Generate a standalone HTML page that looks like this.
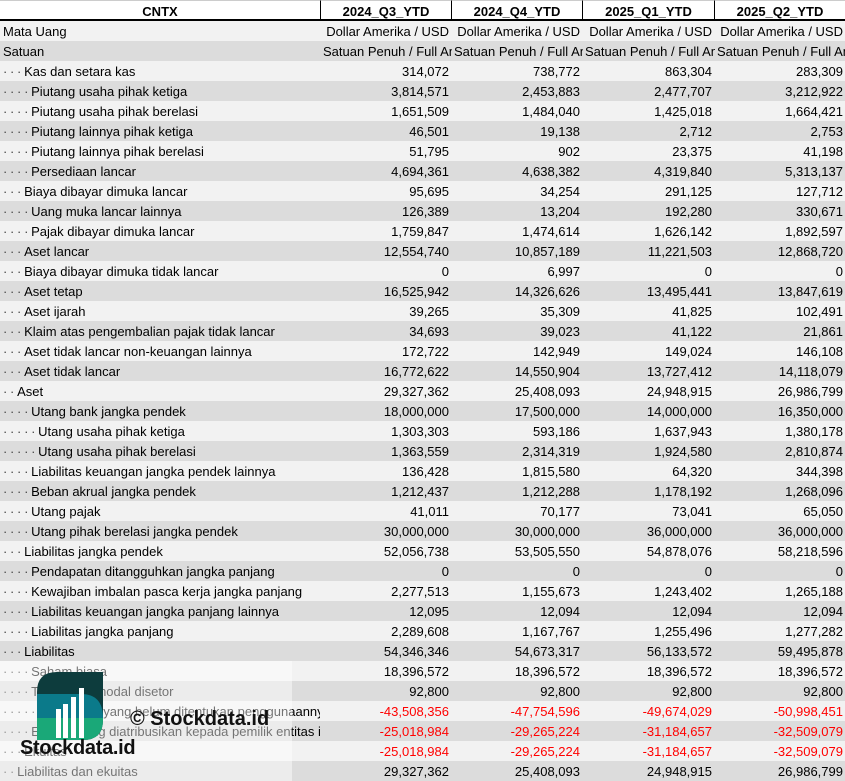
<!DOCTYPE html>
<html><head><meta charset="utf-8"><style>
body{margin:0;width:845px;height:781px;overflow:hidden;background:#fff;font-family:"Liberation Sans",sans-serif;font-size:13px;color:#000;position:relative}
.r{position:absolute;left:0;width:845px;height:20px;line-height:22px;white-space:nowrap}
.r.l{background:#f2f2f2}.r.d{background:#dcdcdc}
.c{position:absolute;top:0;height:20px;overflow:hidden}
.c0{left:3px;width:317px}
.c1{left:320px;width:129px;text-align:right}
.c2{left:451px;width:129px;text-align:right}
.c3{left:582px;width:130px;text-align:right}
.c4{left:714px;width:129px;text-align:right}
.dt{color:#444;letter-spacing:2.7px}
.neg{color:#ff0000}
.h{position:absolute;top:0;height:20px;line-height:21px;font-weight:bold;text-align:center;border-top:1px solid #ccc;box-sizing:border-box}
</style></head><body>
<div class="r" style="top:0;border-bottom:2px solid #000;height:21px;box-sizing:border-box"></div>
<div class="h" style="left:0;width:320px">CNTX</div>
<div class="h" style="left:320px;width:131px;border-left:1px solid #000">2024_Q3_YTD</div>
<div class="h" style="left:451px;width:131px;border-left:1px solid #000">2024_Q4_YTD</div>
<div class="h" style="left:582px;width:132px;border-left:1px solid #000">2025_Q1_YTD</div>
<div class="h" style="left:714px;width:131px;border-left:1px solid #000">2025_Q2_YTD</div>
<div class="r l" style="top:21px;height:20px"><div class="c c0">Mata Uang</div><div class="c c1">Dollar Amerika / USD</div><div class="c c2">Dollar Amerika / USD</div><div class="c c3">Dollar Amerika / USD</div><div class="c c4">Dollar Amerika / USD</div></div>
<div class="r d" style="top:41px"><div class="c c0">Satuan</div><div class="c c1" style="text-align:left;left:323px">Satuan Penuh / Full Amount</div><div class="c c2" style="text-align:left;left:454px">Satuan Penuh / Full Amount</div><div class="c c3" style="text-align:left;left:585px">Satuan Penuh / Full Amount</div><div class="c c4" style="text-align:left;left:717px">Satuan Penuh / Full Amount</div></div>
<div id="rows"></div>
<script>
var R=[
[3,"Kas dan setara kas","314,072","738,772","863,304","283,309"],
[4,"Piutang usaha pihak ketiga","3,814,571","2,453,883","2,477,707","3,212,922"],
[4,"Piutang usaha pihak berelasi","1,651,509","1,484,040","1,425,018","1,664,421"],
[4,"Piutang lainnya pihak ketiga","46,501","19,138","2,712","2,753"],
[4,"Piutang lainnya pihak berelasi","51,795","902","23,375","41,198"],
[4,"Persediaan lancar","4,694,361","4,638,382","4,319,840","5,313,137"],
[3,"Biaya dibayar dimuka lancar","95,695","34,254","291,125","127,712"],
[4,"Uang muka lancar lainnya","126,389","13,204","192,280","330,671"],
[4,"Pajak dibayar dimuka lancar","1,759,847","1,474,614","1,626,142","1,892,597"],
[3,"Aset lancar","12,554,740","10,857,189","11,221,503","12,868,720"],
[3,"Biaya dibayar dimuka tidak lancar","0","6,997","0","0"],
[3,"Aset tetap","16,525,942","14,326,626","13,495,441","13,847,619"],
[3,"Aset ijarah","39,265","35,309","41,825","102,491"],
[3,"Klaim atas pengembalian pajak tidak lancar","34,693","39,023","41,122","21,861"],
[3,"Aset tidak lancar non-keuangan lainnya","172,722","142,949","149,024","146,108"],
[3,"Aset tidak lancar","16,772,622","14,550,904","13,727,412","14,118,079"],
[2,"Aset","29,327,362","25,408,093","24,948,915","26,986,799"],
[4,"Utang bank jangka pendek","18,000,000","17,500,000","14,000,000","16,350,000"],
[5,"Utang usaha pihak ketiga","1,303,303","593,186","1,637,943","1,380,178"],
[5,"Utang usaha pihak berelasi","1,363,559","2,314,319","1,924,580","2,810,874"],
[4,"Liabilitas keuangan jangka pendek lainnya","136,428","1,815,580","64,320","344,398"],
[4,"Beban akrual jangka pendek","1,212,437","1,212,288","1,178,192","1,268,096"],
[4,"Utang pajak","41,011","70,177","73,041","65,050"],
[4,"Utang pihak berelasi jangka pendek","30,000,000","30,000,000","36,000,000","36,000,000"],
[3,"Liabilitas jangka pendek","52,056,738","53,505,550","54,878,076","58,218,596"],
[4,"Pendapatan ditangguhkan jangka panjang","0","0","0","0"],
[4,"Kewajiban imbalan pasca kerja jangka panjang","2,277,513","1,155,673","1,243,402","1,265,188"],
[4,"Liabilitas keuangan jangka panjang lainnya","12,095","12,094","12,094","12,094"],
[4,"Liabilitas jangka panjang","2,289,608","1,167,767","1,255,496","1,277,282"],
[3,"Liabilitas","54,346,346","54,673,317","56,133,572","59,495,878"],
[4,"Saham biasa","18,396,572","18,396,572","18,396,572","18,396,572"],
[4,"Tambahan modal disetor","92,800","92,800","92,800","92,800"],
[5,"Saldo laba yang belum ditentukan penggunaannya","-43,508,356","-47,754,596","-49,674,029","-50,998,451"],
[4,"Ekuitas yang diatribusikan kepada pemilik entitas induk","-25,018,984","-29,265,224","-31,184,657","-32,509,079"],
[3,"Ekuitas","-25,018,984","-29,265,224","-31,184,657","-32,509,079"],
[2,"Liabilitas dan ekuitas","29,327,362","25,408,093","24,948,915","26,986,799"]];
var h="";
R.forEach(function(r,i){
 var dots="";for(var k=0;k<r[0];k++)dots+="·";
 h+='<div class="r '+(i%2?'d':'l')+'" style="top:'+(61+i*20)+'px"><div class="c c0"><span class="dt">'+dots+'</span>'+r[1]+'</div>';
 for(var j=2;j<6;j++)h+='<div class="c c'+(j-1)+(r[j][0]=="-"?' neg':'')+'">'+r[j]+'</div>';
 h+='</div>';
});
document.getElementById("rows").innerHTML=h;
</script>
<div style="position:absolute;left:0;top:661px;width:292px;height:120px;background:rgba(255,255,255,0.45)"></div>
<svg style="position:absolute;left:37px;top:672px" width="66" height="68" viewBox="0 0 66 68">
<defs><clipPath id="cp"><path d="M20 0H66V48Q66 68 46 68H0V20Q0 0 20 0Z"/></clipPath></defs>
<g clip-path="url(#cp)">
<rect width="66" height="68" fill="#0d3c3d"/>
<path d="M0 22H44Q66 22 66 46H0Z" fill="#0b7a8a"/>
<rect y="46" width="66" height="22" fill="#1aa878"/>
</g>
<rect x="19" y="37" width="5" height="29" fill="#fff"/>
<rect x="26" y="32" width="5" height="34" fill="#fff"/>
<rect x="34" y="25" width="5" height="41" fill="#fff"/>
<rect x="42" y="16" width="5" height="50" fill="#fff"/>
</svg>
<div style="position:absolute;left:130px;top:708px;font-size:20px;font-weight:bold;color:#111">© Stockdata.id</div>
<div style="position:absolute;left:20px;top:737px;font-size:20px;font-weight:bold;color:#111;letter-spacing:-0.3px">Stockdata.id</div>
</body></html>
